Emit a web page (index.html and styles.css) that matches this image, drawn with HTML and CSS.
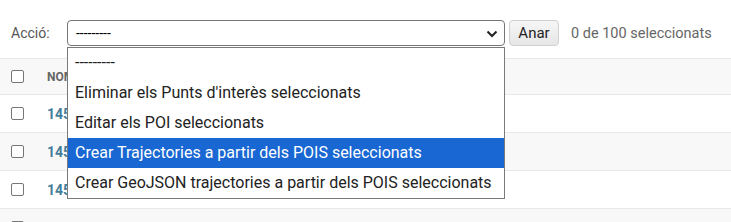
FILE: index.html
```html
<!DOCTYPE html>
<html lang="ca">
<head>
    <meta charset="UTF-8">
    <title>Punts d'interès</title>
    <link rel="stylesheet" href="styles.css">
</head>
<body>
    <div class="changelist">
        <div class="actions">
            <label class="actions-label">Acció:</label>
            <div class="action-select">
                <span>---------</span>
                <svg class="chevron" width="12" height="8" viewBox="0 0 12 8"><path d="M1.5 1.5 L6 6 L10.5 1.5" fill="none" stroke="#222" stroke-width="2"/></svg>
            </div>
            <button class="btn-go">Anar</button>
            <span class="counter">0 de 100 seleccionats</span>

            <!-- open dropdown of the action select -->
            <div class="select-menu">
                <div class="option">---------</div>
                <div class="option">Eliminar els Punts d'interès seleccionats</div>
                <div class="option">Editar els POI seleccionats</div>
                <div class="option selected">Crear Trajectories a partir dels POIS seleccionats</div>
                <div class="option">Crear GeoJSON trajectories a partir dels POIS seleccionats</div>
            </div>
        </div>

        <table class="result-list">
            <thead>
                <tr>
                    <th class="col-check"><span class="checkbox"></span></th>
                    <th>Nom</th>
                </tr>
            </thead>
            <tbody>
                <tr>
                    <td class="col-check"><span class="checkbox"></span></td>
                    <td><a href="#">1450100541 01 de 2019 i</a></td>
                </tr>
                <tr>
                    <td class="col-check"><span class="checkbox"></span></td>
                    <td><a href="#">1450100542 04 de 2019 i</a></td>
                </tr>
                <tr>
                    <td class="col-check"><span class="checkbox"></span></td>
                    <td><a href="#">1450100543 07 de 2019 i</a></td>
                </tr>
                <tr>
                    <td class="col-check"><span class="checkbox"></span></td>
                    <td><a href="#">1450100547 13 — 2019 i</a></td>
                </tr>
            </tbody>
        </table>
    </div>
</body>
</html>
```

FILE: styles.css
```css
body {
    margin: 0;
    font-family: Roboto, "Liberation Sans", sans-serif;
    color: #333;
    background: #fff;
}

.changelist {
    width: 731px;
}

.actions {
    position: relative;
    display: flex;
    align-items: center;
    height: 26px;
    padding: 20px 0 12px 11px;
}

.actions-label {
    font-size: 14px;
    color: #555;
    width: 56px;
}

.action-select {
    box-sizing: border-box;
    width: 438px;
    height: 26px;
    border: 1px solid #767676;
    border-radius: 4px;
    display: flex;
    align-items: center;
    justify-content: space-between;
    padding: 0 6px 0 8px;
    font-size: 14px;
    color: #000;
}

.chevron {
    margin-top: 1px;
}

.btn-go {
    box-sizing: border-box;
    margin-left: 4px;
    height: 26px;
    width: 50px;
    padding: 0;
    font-family: inherit;
    font-size: 15px;
    color: #222;
    background: linear-gradient(#f6f6f6, #e6e6e6);
    border: 1px solid #d0d0d0;
    border-radius: 4px;
}

.counter {
    margin-left: 12px;
    font-size: 14.5px;
    color: #666;
}

.select-menu {
    position: absolute;
    top: 47px;
    left: 67px;
    width: 438px;
    box-sizing: border-box;
    background: #fff;
    border: 1px solid #7a7a7a;
    z-index: 2;
}

.option {
    height: 30px;
    line-height: 30px;
    padding-left: 7px;
    font-size: 16px;
    color: #222;
    white-space: nowrap;
}

.option.selected {
    background: #1967d2;
    color: #fff;
}

.result-list {
    width: 100%;
    border-collapse: collapse;
}

.result-list th,
.result-list td {
    border-top: 1px solid #e8e8e8;
    text-align: left;
    padding: 0;
}

.result-list th {
    height: 35px;
    background: #f8f8f8;
    font-size: 12px;
    font-weight: bold;
    text-transform: uppercase;
    color: #666;
}

.result-list td {
    height: 37px;
}

.result-list tbody tr:nth-child(even) td {
    background: #f8f8f8;
}

.col-check {
    width: 36px;
    padding-left: 11px !important;
}

.checkbox {
    display: block;
    width: 11px;
    height: 11px;
    border: 1px solid #767676;
    border-radius: 2px;
    background: #fff;
}

.result-list a {
    font-size: 14px;
    font-weight: bold;
    color: #447e9b;
    text-decoration: none;
}
```
